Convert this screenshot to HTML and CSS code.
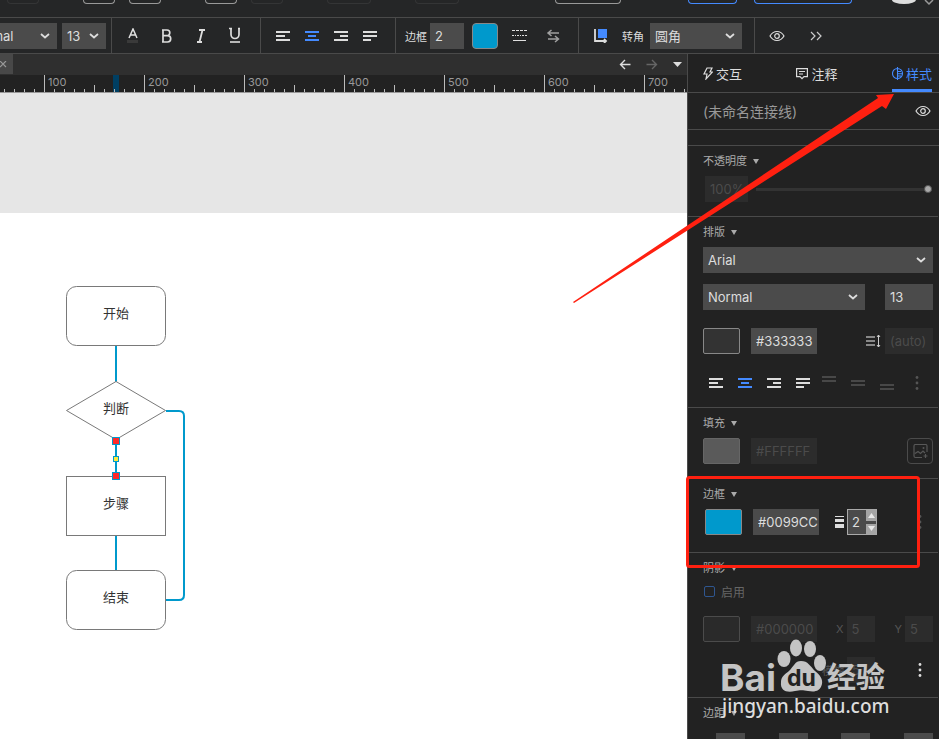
FILE: index.html
```html
<!DOCTYPE html>
<html lang="zh-CN">
<head>
    <meta charset="UTF-8">
    <title>流程图</title>
    <link rel="stylesheet" href="styles.css">
</head>
<body>
    <!-- shared icons -->
    <svg class="sprite" aria-hidden="true">
        <symbol id="chevron" viewBox="0 0 10 6"><path d="M1 1l4 3.5L9 1" fill="none" stroke="currentColor" stroke-width="1.8"/></symbol>
        <symbol id="caret" viewBox="0 0 6 5"><path d="M0 0h6L3 5z" fill="currentColor"/></symbol>
        <symbol id="align-left" viewBox="0 0 14 10"><path d="M0 0h14v2H0zM0 4h9v2H0zM0 8h14v2H0z" fill="currentColor"/></symbol>
        <symbol id="align-center" viewBox="0 0 14 10"><path d="M0 0h14v2H0zM3 4h8v2H3zM0 8h14v2H0z" fill="currentColor"/></symbol>
        <symbol id="align-right" viewBox="0 0 14 10"><path d="M0 0h14v2H0zM6 4h8v2H6zM0 8h14v2H0z" fill="currentColor"/></symbol>
        <symbol id="align-justify" viewBox="0 0 14 10"><path d="M0 0h14v2H0zM0 4h14v2H0zM0 8h8v2H0z" fill="currentColor"/></symbol>
        <symbol id="eye" viewBox="0 0 16 12"><path d="M1 6c3.5-6 10.500-6 14 0c-3.500 6-10.500 6-14 0z" fill="none" stroke="currentColor" stroke-width="1.200"/><circle cx="8" cy="6" r="2.300" fill="none" stroke="currentColor" stroke-width="1.200"/></symbol>
        <symbol id="dots" viewBox="0 0 4 14"><circle cx="2" cy="1.500" r="1.400" fill="currentColor"/><circle cx="2" cy="7" r="1.400" fill="currentColor"/><circle cx="2" cy="12.500" r="1.400" fill="currentColor"/></symbol>
    </svg>

    <div class="app">
        <header class="menubar">
            <div class="menu-group">
                <button class="menu-button faint" aria-label="新建"></button>
            </div>
            <div class="menu-group">
                <button class="menu-button" aria-label="撤销"></button>
                <button class="menu-button" aria-label="重做"></button>
            </div>
            <div class="menu-group">
                <button class="menu-button" aria-label="选择"></button>
                <button class="menu-button faint" aria-label="连接"></button>
            </div>
            <div class="menu-group">
                <button class="menu-button faint medium" aria-label="组合"></button>
            </div>
            <div class="menu-group">
                <button class="menu-button faint medium" aria-label="取消组合"></button>
            </div>
            <div class="menu-group menu-right">
                <button class="menu-button zoom-box" aria-label="缩放"></button>
                <button class="menu-button blue preview" aria-label="预览"></button>
                <button class="menu-button blue share" aria-label="共享"></button>
                <span class="avatar"></span>
                <svg class="user-arrow" viewBox="0 0 10 6"><path d="M1 0l4 4L9 0" fill="none" stroke="#999" stroke-width="1.500"/></svg>
            </div>
        </header>

        <div class="toolbar">
            <div class="group font-group">
                <span class="select-wrap weight-select">
                    <select aria-label="字重"><option>Normal</option></select>
                    <svg class="chevron"><use href="#chevron"/></svg>
                </span>
                <span class="select-wrap size-select">
                    <select aria-label="字号"><option>13</option></select>
                    <svg class="chevron"><use href="#chevron"/></svg>
                </span>
            </div>
            <div class="group text-group">
                <button aria-label="文字颜色"><svg width="12" height="16" viewBox="0 0 12 16"><path d="M2 10l4-9 4 9M3.500 7h5" fill="none" stroke="#e0e0e0" stroke-width="1.500"/><path d="M0 12h11v3H0z" fill="#3a3a3a"/></svg></button>
                <button aria-label="粗体"><svg width="12" height="16" viewBox="0 0 12 16"><path d="M2 2v12h4.500a3.200 3.200 0 0 0 0-6.400H2M6 7.600a2.800 2.800 0 0 0 0-5.600H1M1 14h3" fill="none" stroke="#ddd" stroke-width="1.700"/></svg></button>
                <button aria-label="斜体"><svg width="12" height="16" viewBox="0 0 12 16"><path d="M4 2h6M2 14h5M7.500 2l-3 12" fill="none" stroke="#ddd" stroke-width="1.800"/></svg></button>
                <button aria-label="下划线"><svg width="12" height="18" viewBox="0 0 12 18"><path d="M2 1v6.500a4 4 0 0 0 8 0V1M0 1.500h3M9 1.500h2" fill="none" stroke="#ddd" stroke-width="1.700"/><path d="M1 14h10v2H1z" fill="#b8b8b8"/></svg></button>
            </div>
            <div class="group align-group">
                <button aria-label="左对齐"><svg class="align"><use href="#align-left"/></svg></button>
                <button class="active" aria-label="居中"><svg class="align"><use href="#align-center"/></svg></button>
                <button aria-label="右对齐"><svg class="align"><use href="#align-right"/></svg></button>
                <button aria-label="两端对齐"><svg class="align"><use href="#align-justify"/></svg></button>
            </div>
            <div class="group border-group">
                <label for="bar-border">边框</label>
                <input id="bar-border" class="field" type="text" value="2">
                <button class="swatch cyan bar-swatch" aria-label="边框颜色"></button>
                <button class="line-style" aria-label="线型"><svg width="15" height="13" viewBox="0 0 15 13"><path d="M0 1.500h3M4 1.500h3M8 1.500h3M12 1.500h3M0 6.500h2M3 6.500h1M5 6.500h2M8 6.500h1M10 6.500h2M13 6.500h2M1 11.500h13" stroke="#e0e0e0" stroke-width="1"/></svg></button>
                <button class="arrow-style" aria-label="箭头样式"><svg width="15" height="14" viewBox="0 0 15 14"><path d="M13 4H2M5.500 1L2 4l3.500 3M2 10h11M9 7l3.500 3L9 13" fill="none" stroke="#a0a0a0" stroke-width="1.500"/></svg></button>
            </div>
            <div class="group corner-group">
                <svg width="14" height="15" viewBox="0 0 14 15"><path d="M4 1h9v9H4z" fill="#448aff"/><path d="M1 1v12h11M10 11l2 2-2 2" fill="none" stroke="#ddd" stroke-width="1.800"/></svg>
                <label for="corner">转角</label>
                <span class="select-wrap corner-select">
                    <select id="corner"><option>圆角</option></select>
                    <svg class="chevron"><use href="#chevron"/></svg>
                </span>
            </div>
            <div class="group view-group">
                <button aria-label="显示"><svg class="eye"><use href="#eye"/></svg></button>
                <button aria-label="更多"><svg width="12" height="10" viewBox="0 0 12 10"><path d="M1 1l4 4-4 4M7 1l4 4-4 4" fill="none" stroke="#ccc" stroke-width="1.200"/></svg></button>
            </div>
        </div>

        <div class="main">
            <section class="workspace">
                <div class="page-tabs">
                    <button class="close-tab" aria-label="关闭"><svg width="7" height="7" viewBox="0 0 7 7"><path d="M0 0l6 6M6 0L0 6" stroke="#999" stroke-width="1.200"/></svg></button>
                    <div class="page-nav">
                        <button aria-label="后退"><svg width="12" height="11" viewBox="0 0 12 11"><path d="M11.500 5.500H1.500M6 1L1.500 5.500 6 10" fill="none" stroke="#ddd" stroke-width="1.400"/></svg></button>
                        <button aria-label="前进"><svg width="12" height="11" viewBox="0 0 12 11"><path d="M.5 5.500h10M6 1l4.500 4.500L6 10" fill="none" stroke="#666" stroke-width="1.400"/></svg></button>
                        <button aria-label="页面列表"><svg width="9" height="6" viewBox="0 0 9 6"><path d="M0 0h9L4.500 5z" fill="#ddd"/></svg></button>
                    </div>
                </div>
                <div class="ruler">
                    <span>100</span><span>200</span><span>300</span><span>400</span><span>500</span><span>600</span><span>700</span>
                </div>
                <div class="canvas">
                    <svg class="diagram">
                        <g fill="none" stroke="#0099cc" stroke-width="2">
                            <path d="M116 133v36M116 227v36M116 323v34"/>
                            <path d="M166 198h13q5 0 5 5v179q0 5-5 5h-13"/>
                        </g>
                        <g fill="#fff" stroke="#797979">
                            <rect x="66.5" y="73.5" width="99" height="59" rx="10"/>
                            <path d="M66.500 197.500L116 168.500l49.500 29L116 226.500z"/>
                            <rect x="66.5" y="263.5" width="99" height="59"/>
                            <rect x="66.5" y="357.5" width="99" height="59" rx="10"/>
                        </g>
                        <g stroke="#0099cc">
                            <rect x="112.5" y="224.5" width="7" height="7" fill="#ff2a2a"/>
                            <rect x="113.5" y="243.5" width="5" height="5" fill="#ffeb3b"/>
                            <rect x="112.5" y="259.5" width="7" height="7" fill="#ff2a2a"/>
                        </g>
                        <g class="node-text">
                            <text x="116" y="105">开始</text>
                            <text x="116" y="200">判断</text>
                            <text x="116" y="295">步骤</text>
                            <text x="116" y="389">结束</text>
                        </g>
                    </svg>
                </div>
            </section>

            <aside class="panel">
                <nav class="panel-tabs">
                    <a href="#interact"><svg width="10" height="13" viewBox="0 0 10 13"><path d="M4 1h5L7 5h2.500L3 12l1-5H1z" fill="none" stroke="currentColor" stroke-width="1.200"/></svg>交互</a>
                    <a href="#notes"><svg width="12" height="13" viewBox="0 0 12 13"><path d="M.6 1.600h10.800v8H8l-2 2-2-2H.6zM3 4.500h6M3 7h4" fill="none" stroke="currentColor" stroke-width="1.200"/></svg>注释</a>
                    <a href="#style" class="active"><svg width="11" height="13" viewBox="0 0 11 13"><path d="M5.500 0v13M5.500 1.500a5 5 0 0 0 0 10a5 5 0 0 0 0-10M5.500 4.500H9M5.500 6.800h4.500M5.500 9H9" fill="none" stroke="currentColor" stroke-width="1.100"/></svg>样式</a>
                </nav>
                <div class="name-row">
                    <span>(未命名连接线)</span>
                    <button aria-label="可见"><svg class="eye"><use href="#eye"/></svg></button>
                </div>
                <div class="spacer"></div>

                <section class="section">
                    <h2>不透明度 <svg class="caret"><use href="#caret"/></svg></h2>
                    <div class="row indent">
                        <input class="field opacity" type="text" value="100%" aria-label="不透明度" disabled>
                        <input class="slider" type="range" value="100" aria-label="不透明度滑块">
                    </div>
                </section>

                <section class="section type-section">
                    <h2>排版 <svg class="caret"><use href="#caret"/></svg></h2>
                    <span class="select-wrap">
                        <select aria-label="字体"><option>Arial</option></select>
                        <svg class="chevron"><use href="#chevron"/></svg>
                    </span>
                    <div class="row weight-row">
                        <span class="select-wrap">
                            <select aria-label="字重"><option>Normal</option></select>
                            <svg class="chevron"><use href="#chevron"/></svg>
                        </span>
                        <input class="field size" type="text" value="13" aria-label="字号">
                    </div>
                    <div class="row color-row">
                        <button class="swatch dark" aria-label="文字颜色"></button>
                        <input class="field hex" type="text" value="#333333" aria-label="文字颜色值">
                        <svg class="push" width="15" height="14" viewBox="0 0 15 14"><path d="M0 2h9v2H0zM0 6h9v2H0zM0 10h9v2H0z" fill="#888"/><path d="M12.500 1v12M11 3l1.500-2L14 3M11 11l1.500 2 1.500-2" fill="none" stroke="#ccc"/></svg>
                        <input class="field size line-height" type="text" value="(auto)" aria-label="行高" disabled>
                    </div>
                    <div class="align-row">
                        <div class="align-set">
                            <button aria-label="左对齐"><svg class="align"><use href="#align-left"/></svg></button>
                            <button class="active" aria-label="居中"><svg class="align"><use href="#align-center"/></svg></button>
                            <button aria-label="右对齐"><svg class="align"><use href="#align-right"/></svg></button>
                            <button aria-label="两端对齐"><svg class="align"><use href="#align-justify"/></svg></button>
                        </div>
                        <div class="valign-set">
                            <button aria-label="顶部" disabled><svg width="14" height="14"><path d="M0 0h14v2H0zM0 4h14v2H0z" fill="#484848"/></svg></button>
                            <button aria-label="中部" disabled><svg width="14" height="14"><path d="M0 4h14v2H0zM0 8h14v2H0z" fill="#484848"/></svg></button>
                            <button aria-label="底部" disabled><svg width="14" height="14"><path d="M0 8h14v2H0zM0 12h14v2H0z" fill="#484848"/></svg></button>
                        </div>
                        <button class="more dim push" aria-label="更多排版"><svg class="dots"><use href="#dots"/></svg></button>
                    </div>
                </section>

                <section class="section">
                    <h2>填充 <svg class="caret"><use href="#caret"/></svg></h2>
                    <div class="row">
                        <button class="swatch gray" aria-label="填充颜色"></button>
                        <input class="field hex" type="text" value="#FFFFFF" aria-label="填充颜色值" disabled>
                        <button class="image-button push" aria-label="填充图片"><svg width="15" height="15" viewBox="0 0 15 15"><path d="M14 8V2q0-1.500-1.500-1.500h-10Q1 .5 1 2v10q0 1.500 1.500 1.500H9M2 9.500l3-2 2.500 2L10 7l2 2M12.500 10v4M10.500 12h4" fill="none" stroke="#585858" stroke-width="1.200"/><circle cx="10.500" cy="4" r="1" fill="#585858"/></svg></button>
                    </div>
                </section>

                <section class="section border-section">
                    <h2>边框 <svg class="caret"><use href="#caret"/></svg></h2>
                    <div class="row indent">
                        <button class="swatch cyan" aria-label="边框颜色"></button>
                        <input class="field hex" type="text" value="#0099CC" aria-label="边框颜色值">
                        <div class="stroke-width">
                            <svg width="9" height="12" viewBox="0 0 9 12"><path d="M0 0h9v1H0zM0 3h9v3H0zM0 8h9v4H0z" fill="#ddd"/></svg>
                            <div class="stepper">
                                <input type="number" value="2" aria-label="边框宽度">
                                <div class="steps">
                                    <button aria-label="增加"><svg width="7" height="5"><path d="M0 5h7L3.500 0z" fill="#e8e8e8"/></svg></button>
                                    <button aria-label="减少"><svg width="7" height="5"><path d="M0 0h7L3.500 5z" fill="#e8e8e8"/></svg></button>
                                </div>
                            </div>
                        </div>
                        <button class="more dim push" aria-label="更多边框"><svg class="dots"><use href="#dots"/></svg></button>
                    </div>
                </section>

                <section class="section">
                    <h2>阴影 <svg class="caret"><use href="#caret"/></svg></h2>
                    <label class="enable"><input type="checkbox">启用</label>
                    <div class="row">
                        <button class="swatch off" aria-label="阴影颜色"></button>
                        <input class="field hex" type="text" value="#000000" aria-label="阴影颜色值" disabled>
                        <div class="offsets push">
                            <label>X<input class="field mini" type="text" value="5" disabled></label>
                            <label>Y<input class="field mini" type="text" value="5" disabled></label>
                        </div>
                    </div>
                    <div class="row blur-row">
                        <label class="blur push">模糊<input class="field mini" type="text" value="5" disabled></label>
                        <button class="more" aria-label="更多阴影"><svg class="dots"><use href="#dots"/></svg></button>
                    </div>
                </section>

                <section class="section">
                    <h2>边距 <svg class="caret"><use href="#caret"/></svg></h2>
                    <div class="margins">
                        <input class="field" type="text" aria-label="左边距">
                        <input class="field" type="text" aria-label="上边距">
                        <input class="field" type="text" aria-label="右边距">
                        <input class="field" type="text" aria-label="下边距">
                    </div>
                </section>
            </aside>
        </div>

        <!-- callout arrow, box and site mark over the editor -->
        <svg class="callout" width="939" height="739" viewBox="0 0 939 739">
            <path d="M573 302L878 98l-2-3 18-1-8 15-4-3L574 303z" fill="#ff2010"/>
            <rect x="687.5" y="477.5" width="231" height="89" rx="2" fill="none" stroke="#ff2010" stroke-width="3"/>
            <g fill="#c4c4c4">
                <text class="mark-latin" x="720" y="691">Bai</text>
                <ellipse cx="784" cy="659" rx="6.500" ry="8"/>
                <ellipse cx="796" cy="648" rx="6" ry="8.500"/>
                <ellipse cx="810" cy="649" rx="6" ry="8"/>
                <ellipse cx="820" cy="663" rx="6" ry="8"/>
                <path d="M801 661c7 0 9 5 14 10c5 4 8 8 7 13c-2 8-8 8-14 7c-5-1-8-1-13 0c-8 2-15 0-14-9c0-5 4-8 8-11c5-5 6-10 12-10z"/>
                <text class="mark-cjk" x="827" y="688">经验</text>
            </g>
            <text class="mark-du" x="787" y="686">du</text>
            <text class="mark-url" x="722" y="713">jingyan.baidu.com</text>
        </svg>
    </div>
</body>
</html>
```

FILE: styles.css
```css
* {
    box-sizing: border-box;
}

body {
    margin: 0;
    font-family: Inter, "Noto Sans CJK SC", sans-serif;
    font-size: 13px;
    color: #ddd;
    background: #222;
}

button {
    display: flex;
    align-items: center;
    justify-content: center;
    padding: 0;
    border: none;
    background: none;
    color: #ddd;
    cursor: pointer;
}

button.active {
    color: #448aff;
}

input, select {
    min-width: 0;
    font: inherit;
}

svg {
    display: block;
    flex: none;
}

.sprite {
    position: absolute;
    width: 0;
    height: 0;
}

.app {
    position: relative;
    display: flex;
    flex-direction: column;
    height: 100vh;
    overflow: hidden;
}

/* top menu */
.menubar {
    display: flex;
    align-items: flex-start;
    flex: none;
    gap: 44px;
    height: 18px;
    padding: 0 5px 0 7px;
    background: #252627;
    border-bottom: 1px solid #4a4a4a;
}

.menu-group {
    display: flex;
    gap: 14px;
}

.menu-button {
    width: 32px;
    height: 4px;
    border: 1px solid #999;
    border-top: none;
    border-radius: 0 0 4px 4px;
}

.menu-button.faint {
    border-color: #343536;
}

.menu-button.medium {
    width: 44px;
}

.menu-button.blue {
    border-color: #448aff;
    border-radius: 0 0 8px 8px;
}

.menu-right {
    gap: 0;
    margin-left: auto;
}

.menu-button.zoom-box {
    width: 66px;
    margin-right: 67px;
}

.menu-button.preview {
    width: 49px;
    margin-right: 17px;
}

.menu-button.share {
    width: 98px;
    margin-right: 40px;
}

.avatar {
    width: 24px;
    height: 4px;
    border-radius: 0 0 12px 12px / 0 0 4px 4px;
    background: #ddd;
}

.user-arrow {
    width: 10px;
    height: 6px;
    margin-left: 8px;
}

/* toolbar */
.toolbar {
    display: flex;
    flex: none;
    height: 36px;
    margin-left: -36px;
    background: #252627;
    border-bottom: 1px solid #4a4a4a;
}

.group {
    display: flex;
    align-items: center;
    border-right: 1px solid #4a4a4a;
}

.group label {
    font-size: 11px;
}

.font-group {
    gap: 5px;
    padding-right: 5px;
}

.weight-select {
    width: 93px;
}

.size-select {
    width: 44px;
}

.text-group {
    padding: 0 8px 0 4px;
}

.text-group button {
    width: 34px;
}

.align-group {
    gap: 15px;
    padding: 0 18px 0 15px;
}

.align {
    width: 14px;
    height: 10px;
}

.border-group {
    padding: 0 17px 0 9px;
}

.border-group .field {
    width: 34px;
    margin: 0 8px 0 3px;
}

.bar-swatch.swatch {
    width: 26px;
    border-radius: 4px;
}

.line-style {
    margin: 0 19px 0 14px;
}

.corner-group {
    padding: 0 12px 0 15px;
}

.corner-group label {
    margin: 0 6px 0 14px;
}

.corner-select {
    width: 92px;
}

.view-group {
    flex: 1;
    gap: 25px;
    padding-left: 14px;
    border-right: none;
}

.eye {
    width: 16px;
    height: 12px;
}

/* form parts */
.field, .select-wrap select {
    height: 26px;
    padding: 0 0 0 5px;
    border: none;
    border-radius: 0;
    outline: none;
    background: #4b4b4b;
    color: #ddd;
}

.field:disabled {
    background: #2c2c2c;
    color: #4b4b4b;
}

.select-wrap {
    display: grid;
    align-items: center;
}

.select-wrap select {
    grid-area: 1 / 1;
    width: 100%;
    appearance: none;
}

.select-wrap .chevron {
    grid-area: 1 / 1;
    justify-self: end;
    width: 10px;
    height: 6px;
    margin-right: 7px;
    pointer-events: none;
}

.swatch {
    flex: none;
    width: 37px;
    height: 26px;
    border: 1px solid #888;
    border-radius: 2px;
}

.swatch.cyan {
    background: #0099cc;
}

.swatch.dark {
    background: #333;
}

.swatch.gray {
    background: #5a5a5a;
    border-color: #666;
}

.swatch.off {
    background: #2a2a2a;
    border-color: #4b4b4b;
}

/* workspace */
.main {
    display: flex;
    flex: 1;
    min-height: 0;
}

.workspace {
    display: flex;
    flex: 1;
    flex-direction: column;
    min-width: 0;
}

.page-tabs {
    display: flex;
    justify-content: space-between;
    height: 21px;
    background: #2f2f2f;
}

.close-tab {
    width: 13px;
    height: 20px;
    padding-right: 6px;
    background: #484848;
}

.page-nav {
    display: flex;
    gap: 15px;
    padding-right: 5px;
}

/* small ticks every 10, taller one at 50 */
.ruler {
    display: flex;
    height: 18px;
    padding-left: 44px;
    overflow: hidden;
    border-bottom: 1px solid #999;
    background:
        linear-gradient(90deg, #bbb 1px, transparent 1px) 4px 14px / 10px 3px repeat-x,
        linear-gradient(90deg, #bbb 1px, transparent 1px) 94px 10px / 100px 7px repeat-x,
        linear-gradient(#003f63, #003f63) 113px 0 / 6px 17px no-repeat,
        #222;
}

.ruler span {
    flex: none;
    width: 100px;
    height: 17px;
    padding-left: 3px;
    border-left: 1px solid #bbb;
    color: #999;
    font-size: 11px;
    line-height: 14px;
}

.canvas {
    flex: 1;
    padding-top: 120px;
    background: #e6e6e6;
}

.diagram {
    width: 100%;
    height: 100%;
    background: #fff;
}

.node-text {
    fill: #333;
    font-size: 13px;
    text-anchor: middle;
}

/* style panel */
.panel {
    flex: none;
    width: 252px;
    overflow: hidden;
    border-left: 1px solid #4a4a4a;
    background: #222;
}

.panel-tabs {
    display: flex;
    justify-content: space-between;
    height: 39px;
    padding: 0 7px 0 15px;
    border-bottom: 1px solid #4a4a4a;
}

.panel-tabs a {
    display: flex;
    align-items: center;
    gap: 3px;
    height: 38px;
    padding-top: 3px;
    border-bottom: 3px solid transparent;
    color: #ddd;
    text-decoration: none;
}

.panel-tabs a.active {
    border-color: #448aff;
    color: #448aff;
}

.name-row {
    display: flex;
    align-items: center;
    justify-content: space-between;
    height: 37px;
    padding: 0 8px 0 15px;
    border-bottom: 1px solid #4a4a4a;
    color: #999;
    font-size: 14px;
}

.spacer {
    height: 16px;
    border-bottom: 1px solid #4a4a4a;
}

.section {
    margin-right: 1px;
    padding: 9px 5px 14px 15px;
    border-bottom: 1px solid #4a4a4a;
}

.section h2 {
    display: flex;
    align-items: center;
    gap: 6px;
    margin: 0 0 9px;
    color: #aaa;
    font-size: 11px;
    font-weight: normal;
    line-height: 12px;
}

.caret {
    width: 6px;
    height: 5px;
}

.row {
    display: flex;
    align-items: center;
    height: 26px;
}

.indent {
    padding-left: 2px;
}

.push {
    margin-left: auto;
}

.opacity {
    width: 43px;
    margin-right: 8px;
}

.slider {
    flex: 1;
    height: 8px;
    margin: 0 1px 0 0;
    appearance: none;
    background: linear-gradient(#333, #333) 0 3px / 100% 3px no-repeat;
}

.slider::-webkit-slider-thumb {
    appearance: none;
    width: 8px;
    height: 8px;
    border: 1px solid #555;
    border-radius: 50%;
    background: #aaa;
}

.type-section {
    padding-bottom: 16px;
}

.weight-row {
    justify-content: space-between;
    margin-top: 11px;
}

.weight-row .select-wrap {
    width: 162px;
}

.size {
    width: 48px;
}

.color-row {
    margin-top: 18px;
}

.line-height {
    margin-left: 4px;
}

.hex {
    width: 66px;
    margin-left: 11px;
}

.align-row {
    display: flex;
    align-items: center;
    height: 16px;
    margin-top: 21px;
    padding: 0 14px 0 6px;
}

.align-set {
    display: flex;
    gap: 15px;
}

.valign-set {
    display: flex;
    gap: 15px;
    margin-left: 12px;
}

.dots {
    width: 4px;
    height: 14px;
}

.more.dim {
    color: #555;
}

.image-button {
    width: 26px;
    height: 26px;
    border: 1px solid #4b4b4b;
    border-radius: 4px;
}

.border-section {
    padding-bottom: 17px;
}

.border-section .more, .blur-row .more {
    margin-right: 11px;
}

.stroke-width {
    display: flex;
    align-items: center;
    gap: 3px;
    margin-left: 16px;
}

.stepper {
    display: flex;
    width: 30px;
    height: 26px;
    border: 1px solid #aaa;
    background: #4b4b4b;
}

.stepper input {
    flex: 1;
    padding: 0 0 0 4px;
    border: none;
    outline: none;
    background: none;
    color: #ddd;
    appearance: textfield;
}

.stepper input::-webkit-inner-spin-button {
    display: none;
}

.steps {
    display: flex;
    flex-direction: column;
    gap: 3px;
    width: 10px;
}

.steps button {
    flex: 1;
    background: #a5a5a5;
}

.enable {
    display: flex;
    align-items: center;
    gap: 6px;
    height: 16px;
    margin-bottom: 17px;
    color: #666;
    font-size: 12px;
}

.enable input {
    width: 11px;
    height: 11px;
    margin: 0 0 0 1px;
    appearance: none;
    border: 1px solid #2f568f;
    border-radius: 2px;
}

.offsets {
    display: flex;
    gap: 20px;
}

.offsets label, .blur {
    display: flex;
    align-items: center;
    gap: 3px;
    color: #555;
    font-size: 11px;
}

.mini {
    width: 28px;
    font-size: 13px;
}

.blur-row {
    margin-top: 15px;
}

.blur-row .more {
    margin-left: 43px;
}

.margins {
    display: flex;
    justify-content: space-between;
    margin-top: 14px;
    padding-left: 13px;
}

.margins .field {
    width: 29px;
}

/* overlay */
.callout {
    position: absolute;
    top: 0;
    right: 0;
    pointer-events: none;
}

.mark-latin {
    font-size: 37px;
    font-weight: 700;
}

.mark-cjk {
    font-size: 29px;
    font-weight: 700;
}

.mark-du {
    fill: #222;
    font-size: 23px;
    font-weight: 700;
}

.mark-url {
    fill: #ddd;
    font-family: "Noto Sans", sans-serif;
    font-size: 19px;
    font-weight: 500;
}
```
